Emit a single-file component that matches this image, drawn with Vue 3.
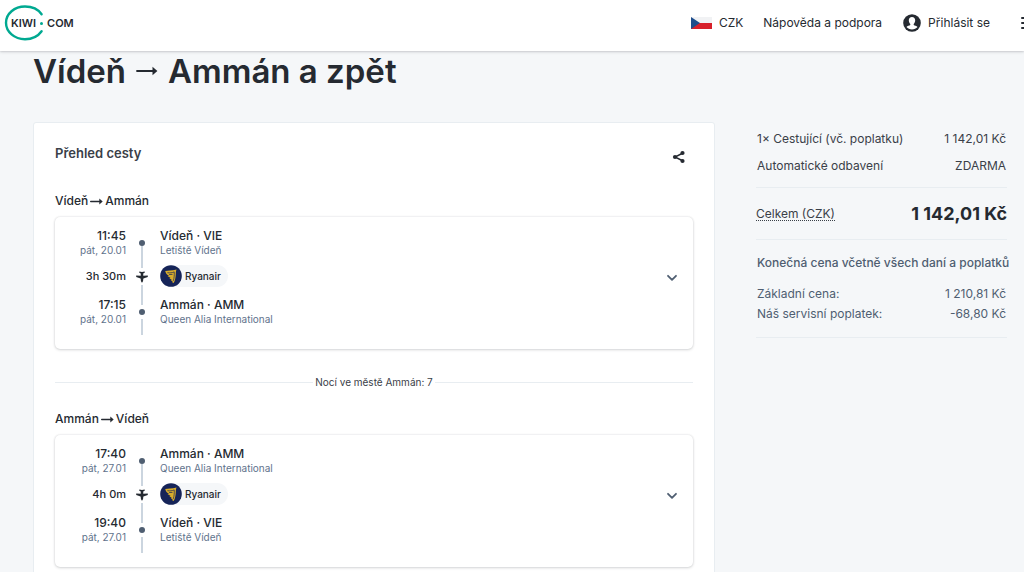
<script setup>
const trips = [
  {
    from: 'Vídeň',
    to: 'Ammán',
    duration: '3h 30m',
    carrier: 'Ryanair',
    stops: [
      { time: '11:45', date: 'pát, 20.01', place: 'Vídeň · VIE', station: 'Letiště Vídeň' },
      { time: '17:15', date: 'pát, 20.01', place: 'Ammán · AMM', station: 'Queen Alia International' },
    ],
    nights: 'Nocí ve městě Ammán: 7',
  },
  {
    from: 'Ammán',
    to: 'Vídeň',
    duration: '4h 0m',
    carrier: 'Ryanair',
    stops: [
      { time: '17:40', date: 'pát, 27.01', place: 'Ammán · AMM', station: 'Queen Alia International' },
      { time: '19:40', date: 'pát, 27.01', place: 'Vídeň · VIE', station: 'Letiště Vídeň' },
    ],
  },
]
const items = [
  { label: '1× Cestující (vč. poplatku)', value: '1 142,01 Kč' },
  { label: 'Automatické odbavení', value: 'ZDARMA' },
]
const details = [
  { label: 'Základní cena:', value: '1 210,81 Kč' },
  { label: 'Náš servisní poplatek:', value: '-68,80 Kč' },
]
</script>

<template>
  <div class="page">
    <header class="bar">
      <a class="logo" href="#" aria-label="Kiwi.com">
        <svg class="ring" width="40" height="36" viewBox="0 0 40 36" aria-hidden="true">
          <path d="M37.600 9.200C34.300 4.500 28 1.500 21 1.500 10.400 1.500 2 8.800 2 17.800S10.400 34.200 21 34.200C28 34.200 34.300 31 37.600 26.300" fill="none" stroke="#00a991" stroke-width="2.400" stroke-linecap="round" />
        </svg>
        <span class="word">KIWI</span>
        <span class="point"></span>
        <span class="word">COM</span>
      </a>
      <nav class="nav">
        <button class="link currency" type="button">
          <svg width="21" height="12" viewBox="0 0 21 12" aria-hidden="true">
            <path fill="#f1f2f4" d="M0 0h21v6H0z" />
            <path fill="#d7202b" d="M0 6h21v6H0z" />
            <path fill="#1d4d8c" d="M0 0l9 6-9 6z" />
          </svg>
          CZK
        </button>
        <a class="link help" href="#">Nápověda a podpora</a>
        <button class="link login" type="button">
          <svg width="18" height="18" viewBox="0 0 18 18" aria-hidden="true">
            <circle cx="9" cy="9" r="8.800" fill="#252a31" />
            <path fill="#fff" d="M9 3c-2 0-3.200 1.400-3.200 3.300 0 1.500.6 2.800 1.500 3.600v1c-.9.700-3 .8-3.800 2.200C4.800 14.700 6.800 15.600 9 15.600s4.200-.9 5.500-2.500c-.8-1.400-2.900-1.500-3.800-2.200v-1c.9-.8 1.500-2.100 1.500-3.600C12.200 4.400 11 3 9 3z" />
          </svg>
          Přihlásit se
        </button>
        <button class="link menu" type="button" aria-label="Menu">
          <svg width="18" height="14" viewBox="0 0 18 14" aria-hidden="true">
            <path d="M2 2h15M2 7h15M2 12h15" stroke="#252a31" stroke-width="2" stroke-linecap="round" />
          </svg>
        </button>
      </nav>
    </header>

    <main class="content">
      <h1 class="title">
        Vídeň
        <svg width="22" height="10" viewBox="0 0 22 10" role="img" aria-label="do">
          <path d="M1 5h17" stroke="#252a31" stroke-width="1.800" stroke-linecap="round" />
          <path d="M16.500.8L21.400 5l-4.900 4.200z" fill="#252a31" />
        </svg>
        Ammán a zpět
      </h1>
      <div class="columns">
        <section class="overview">
          <div class="overview-head">
            <h2>Přehled cesty</h2>
            <button class="share" type="button" aria-label="Sdílet">
              <svg width="14" height="14" viewBox="0 0 14 14" aria-hidden="true">
                <path d="M11 3L3 7l8 4" fill="none" stroke="#252a31" stroke-width="1.400" />
                <circle cx="3" cy="7" r="2.100" fill="#252a31" />
                <circle cx="10.500" cy="3" r="2.100" fill="#252a31" />
                <circle cx="10.500" cy="11" r="2.100" fill="#252a31" />
              </svg>
            </button>
          </div>

          <template v-for="trip in trips" :key="trip.from">
            <h3 class="route">
              {{ trip.from }}
              <svg width="13" height="7" viewBox="0 0 13 7" role="img" aria-label="do">
                <path d="M.7 3.500h9.800" stroke="#252a31" stroke-width="1.400" stroke-linecap="round" />
                <path d="M9.300.6l3.400 2.900-3.400 2.900z" fill="#252a31" />
              </svg>
              {{ trip.to }}
            </h3>
            <article class="segment">
              <div class="itinerary">
                <div class="when">
                  <strong>{{ trip.stops[0].time }}</strong><small>{{ trip.stops[0].date }}</small>
                </div>
                <div class="track">
                  <i class="dot"></i>
                  <i class="line first"></i>
                  <svg width="12" height="12" viewBox="0 0 12 12" aria-hidden="true">
                    <path fill="#252a31" d="M6 11.800c-.9-.7-1.200-2-1.200-3.200L4.600 7.600.2 6V4.600l4.500.2.100-2.400-1.500-.7V.6L6 1l2.700-.4v1.100l-1.500.7.100 2.400 4.500-.2V6L7.400 7.600l-.2 1c0 1.200-.3 2.500-1.200 3.200z" />
                  </svg>
                  <i class="line second"></i>
                  <i class="dot"></i>
                  <i class="line third"></i>
                </div>
                <div class="where">
                  <strong>{{ trip.stops[0].place }}</strong><small>{{ trip.stops[0].station }}</small>
                </div>
                <div class="duration">{{ trip.duration }}</div>
                <div class="carrier">
                  <span class="badge">
                    <svg width="22" height="22" viewBox="0 0 22 22" aria-hidden="true">
                      <circle cx="11" cy="11" r="10.800" fill="#162458" />
                      <path fill="#d9ad2b" d="M5.200 5.900C8 5.600 11.500 6 16.600 4.600c-.6 1-.7 2.600-.8 4.600-.2 3.600-.7 6.300-2.200 8.900l-1.700-1.200 1-.4-2.200-1.300 1.200-.3-2.600-1.700 1.300-.2-3.100-1.900 1.600-.2C7 9.800 5.700 8.200 5.200 5.900z" />
                      <path d="M7.400 7.700c2.600.4 4.800.1 6.800-.8M9 9.600l3.500-.2M14.200 6.900c.2 3.200 0 6-.9 9" fill="none" stroke="#162458" stroke-width=".7" />
                    </svg>
                    {{ trip.carrier }}
                  </span>
                </div>
                <div class="when">
                  <strong>{{ trip.stops[1].time }}</strong><small>{{ trip.stops[1].date }}</small>
                </div>
                <div class="where">
                  <strong>{{ trip.stops[1].place }}</strong><small>{{ trip.stops[1].station }}</small>
                </div>
              </div>
              <button class="expand" type="button" aria-label="Zobrazit podrobnosti">
                <svg width="12" height="8" viewBox="0 0 12 8" aria-hidden="true">
                  <path d="M2 1.800l4 4 4-4" fill="none" stroke="#4f5e71" stroke-width="1.800" stroke-linecap="round" stroke-linejoin="round" />
                </svg>
              </button>
            </article>
            <p v-if="trip.nights" class="nights">{{ trip.nights }}</p>
          </template>
        </section>

        <aside class="summary">
          <dl class="items">
            <div v-for="item in items" :key="item.label" class="row">
              <dt>{{ item.label }}</dt>
              <dd>{{ item.value }}</dd>
            </div>
          </dl>
          <dl class="total row">
            <dt><button class="total-label" type="button">Celkem (CZK)</button></dt>
            <dd>1 142,01 Kč</dd>
          </dl>
          <div class="breakdown">
            <p>Konečná cena včetně všech daní a poplatků</p>
            <dl>
              <div v-for="item in details" :key="item.label" class="row">
                <dt>{{ item.label }}</dt>
                <dd>{{ item.value }}</dd>
              </div>
            </dl>
          </div>
        </aside>
      </div>
    </main>
  </div>
</template>

<style>
html {
  background: #f5f7f9;
  scrollbar-width: none;
}
</style>

<style scoped>
.page {
  height: 100vh;
  overflow: hidden;
  background: #f5f7f9;
  color: #252a31;
  font-family: Inter, "Liberation Sans", sans-serif;
  font-size: 12px;
  line-height: 16px;
}
h1, h2, h3, p, dl, dd {
  margin: 0;
}
button {
  margin: 0;
  padding: 0;
  border: 0;
  background: none;
  color: inherit;
  font: inherit;
  cursor: pointer;
}
svg {
  flex: none;
}
.bar {
  position: relative;
  display: flex;
  align-items: center;
  justify-content: space-between;
  height: 51px;
  padding-left: 4px;
  padding-bottom: 5px;
  box-sizing: border-box;
  overflow-x: clip;
  background: #fff;
  box-shadow: 0 0 2px rgba(37, 42, 49, 0.2), 0 1px 3px rgba(37, 42, 49, 0.16);
}
.logo {
  position: relative;
  display: flex;
  align-items: center;
  height: 36px;
  padding-left: 7px;
  color: #252a31;
  font-size: 11px;
  font-weight: 600;
  text-decoration: none;
}
.ring {
  position: absolute;
  top: 0;
  left: 0;
}
.point {
  width: 3px;
  height: 3px;
  margin: 0 4px;
  border-radius: 50%;
  background: #00a991;
}
.nav {
  display: flex;
  align-items: center;
}
.link {
  display: flex;
  align-items: center;
  color: #252a31;
  text-decoration: none;
  white-space: nowrap;
}
.currency {
  gap: 7px;
  margin-right: 20px;
}
.help {
  margin-right: 21px;
}
.login {
  gap: 7px;
  margin-right: 30px;
}
.menu {
  margin-right: -14px;
}
.content {
  padding: 0 17px 0 33px;
}
.title {
  display: flex;
  align-items: center;
  gap: 10px;
  margin-bottom: 31px;
  font-size: 33px;
  font-weight: 600;
  line-height: 40px;
  white-space: nowrap;
}
.columns {
  display: grid;
  grid-template-columns: minmax(0, 682fr) minmax(0, 251fr);
  gap: 41px;
  align-items: start;
}
.overview {
  padding: 20px 21px 30px;
  border: 1px solid #e8edf1;
  border-radius: 3px;
  background: #fff;
}
.overview-head {
  display: flex;
  justify-content: space-between;
  height: 50px;
}
h2 {
  font-size: 13px;
  font-weight: 600;
  line-height: 20px;
  color: #3a4048;
}
.share {
  display: flex;
  align-self: flex-start;
  padding: 7px 7px 6px;
}
.route {
  display: flex;
  align-items: center;
  gap: 2px;
  margin-bottom: 8px;
  font-size: 12px;
  font-weight: 500;
}
.segment {
  display: flex;
  align-items: center;
  justify-content: space-between;
  padding: 11px 15px 14px 0;
  border-radius: 5px;
  background: #fff;
  box-shadow: 0 0 2px rgba(37, 42, 49, 0.16), 0 1px 3px rgba(37, 42, 49, 0.16);
}
.itinerary {
  display: grid;
  grid-template-columns: 71px 32px auto;
  grid-template-rows: 30px 39px 38px;
}
strong, small {
  display: block;
  line-height: 15px;
}
strong {
  font-size: 12px;
  font-weight: 500;
}
small {
  font-size: 10px;
  color: #5f738c;
}
.when {
  grid-column: 1;
  text-align: right;
}
.where {
  grid-column: 3;
  padding-left: 2px;
}
.duration {
  grid-column: 1;
  grid-row: 2;
  padding-top: 10px;
  text-align: right;
  font-size: 11px;
  font-weight: 500;
}
.carrier {
  grid-column: 3;
  grid-row: 2;
  padding: 7px 0 0 2px;
}
.badge {
  display: inline-flex;
  align-items: center;
  gap: 3px;
  padding-right: 7px;
  border-radius: 11px;
  background: #f5f7f9;
  font-size: 10px;
  font-weight: 500;
  vertical-align: top;
}
.track {
  grid-column: 2;
  grid-row: 1 / 4;
  display: flex;
  flex-direction: column;
  align-items: center;
  padding-top: 12px;
}
.dot {
  width: 6px;
  height: 6px;
  border-radius: 50%;
  background: #4f5e71;
}
.line {
  width: 2px;
  background: #cbd5df;
}
.first {
  height: 22px;
  margin-bottom: 3px;
}
.second {
  height: 20px;
  margin: 2px 0 4px;
}
.third {
  height: 16px;
  margin-top: 4px;
}
.expand {
  margin-bottom: 8px;
  padding: 4px 0;
  line-height: 0;
}
.nights {
  display: flex;
  align-items: center;
  gap: 2px;
  margin: 25px 0 21px;
  font-size: 10px;
  color: #3a4048;
}
.nights::before,
.nights::after {
  content: "";
  flex: 1;
  height: 1px;
  background: #e8edf1;
}
.summary {
  padding-top: 9px;
}
.row {
  display: flex;
  align-items: center;
  justify-content: space-between;
  white-space: nowrap;
}
.items {
  display: grid;
  gap: 11px;
  padding: 0 1px 13px;
  border-bottom: 1px solid #e8edf1;
  color: #3a4048;
}
.total {
  height: 51px;
  border-bottom: 1px solid #e8edf1;
}
.total-label {
  border-bottom: 1px dotted #3a4048;
  color: #3a4048;
  line-height: 13px;
}
.total dd {
  font-size: 18px;
  font-weight: 700;
}
.breakdown {
  padding: 15px 1px 13px;
  border-bottom: 1px solid #e8edf1;
  color: #4f5e71;
}
.breakdown p {
  margin-bottom: 13px;
  font-size: 12px;
  font-weight: 500;
  white-space: nowrap;
}
.breakdown .row {
  line-height: 20px;
}
</style>
